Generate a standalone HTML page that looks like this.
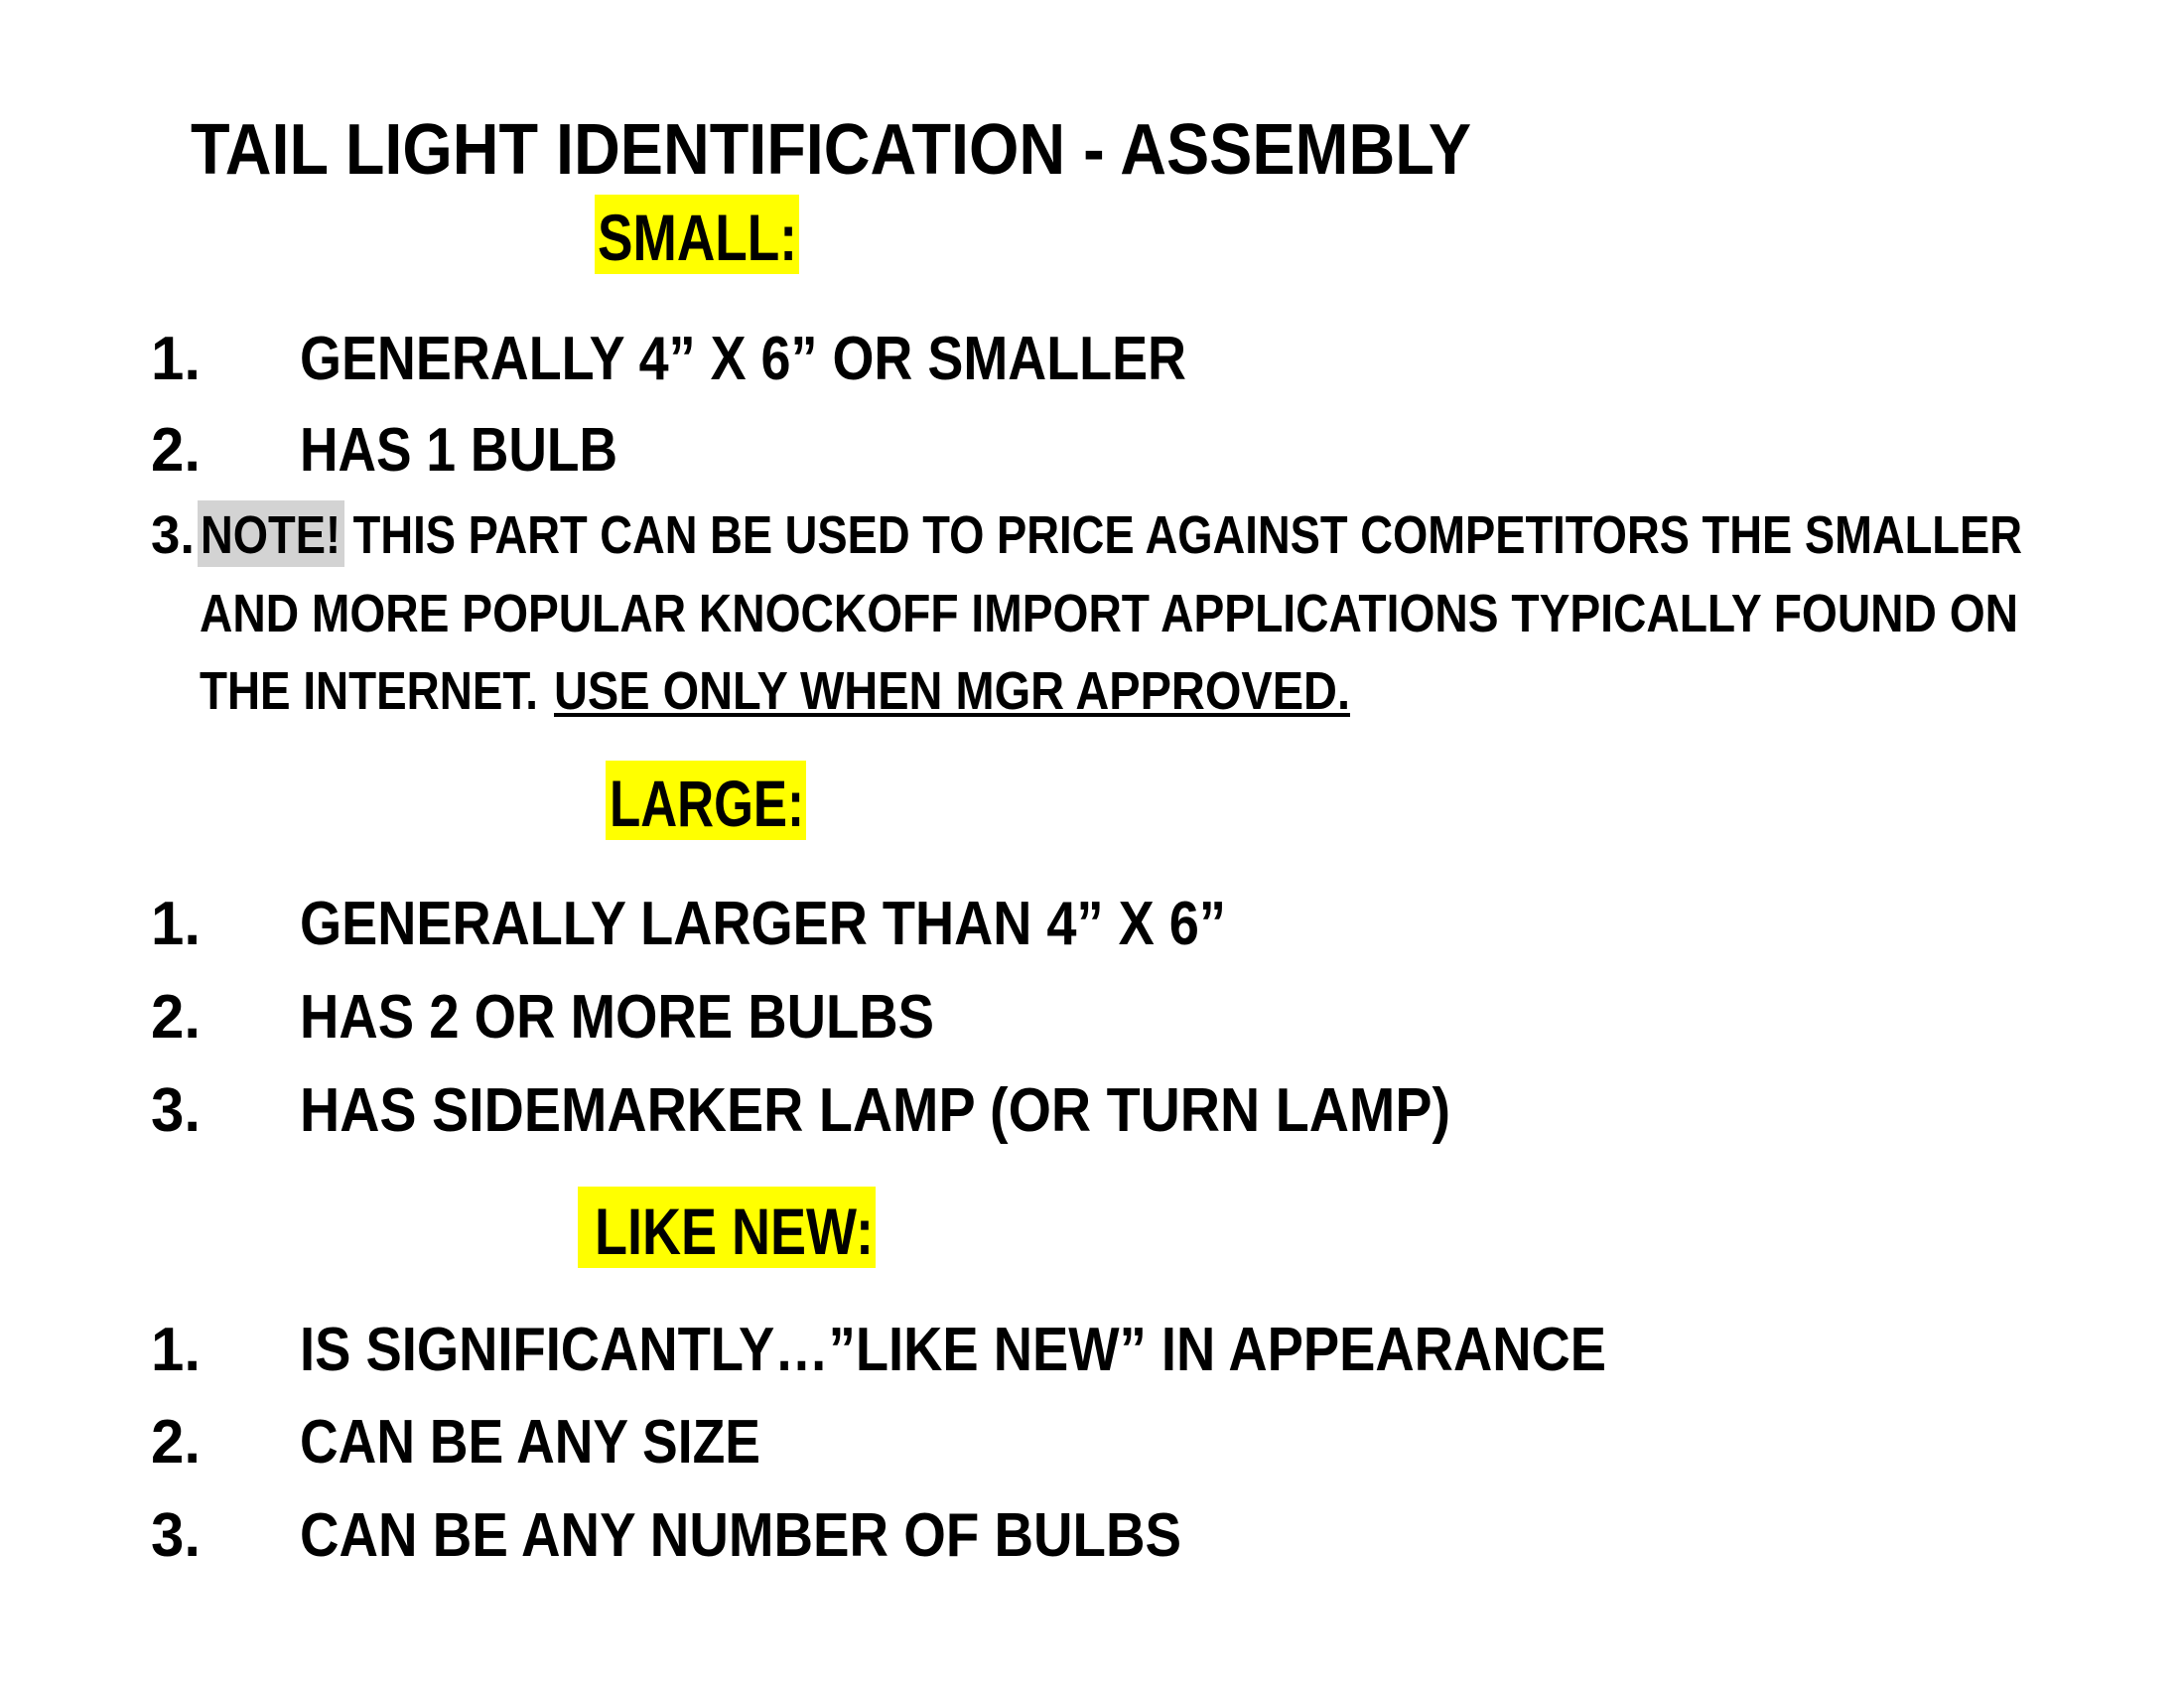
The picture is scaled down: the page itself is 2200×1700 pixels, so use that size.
<!DOCTYPE html>
<html><head><meta charset="utf-8"><style>
html,body{margin:0;padding:0;background:#fff;width:2200px;height:1700px;overflow:hidden}
text{font-family:"Liberation Sans",sans-serif;font-weight:bold;fill:#000}
</style></head><body>
<svg width="2200" height="1700" viewBox="0 0 2200 1700" xmlns="http://www.w3.org/2000/svg">
<rect width="2200" height="1700" fill="#fff"/>
<text x="192" y="175" font-size="72" textLength="1290" lengthAdjust="spacingAndGlyphs">TAIL LIGHT IDENTIFICATION - ASSEMBLY</text>

<rect x="599" y="196" width="206" height="80" fill="#ffff00"/>
<text x="602" y="262" font-size="66" textLength="201" lengthAdjust="spacingAndGlyphs">SMALL:</text>

<text x="152" y="382" font-size="62" textLength="50" lengthAdjust="spacingAndGlyphs">1.</text>
<text x="302" y="382" font-size="62" textLength="893" lengthAdjust="spacingAndGlyphs">GENERALLY 4” X 6” OR SMALLER</text>
<text x="152" y="474" font-size="62" textLength="50" lengthAdjust="spacingAndGlyphs">2.</text>
<text x="302" y="474" font-size="62" textLength="320" lengthAdjust="spacingAndGlyphs">HAS 1 BULB</text>

<rect x="199" y="504" width="148" height="67" fill="#d3d3d3"/>
<text x="152" y="557" font-size="54" textLength="44" lengthAdjust="spacingAndGlyphs">3.</text>
<text x="202" y="557" font-size="54" textLength="1835" lengthAdjust="spacingAndGlyphs">NOTE! THIS PART CAN BE USED TO PRICE AGAINST COMPETITORS THE SMALLER</text>
<text x="201" y="636" font-size="54" textLength="1832" lengthAdjust="spacingAndGlyphs">AND MORE POPULAR KNOCKOFF IMPORT APPLICATIONS TYPICALLY FOUND ON</text>
<text x="201" y="714" font-size="54" textLength="341" lengthAdjust="spacingAndGlyphs">THE INTERNET.</text>
<text x="558" y="714" font-size="54" textLength="802" lengthAdjust="spacingAndGlyphs">USE ONLY WHEN MGR APPROVED.</text>
<rect x="558" y="718" width="802" height="4" fill="#000"/>

<rect x="610" y="766" width="202" height="80" fill="#ffff00"/>
<text x="614" y="832" font-size="66" textLength="196" lengthAdjust="spacingAndGlyphs">LARGE:</text>

<text x="152" y="951" font-size="62" textLength="50" lengthAdjust="spacingAndGlyphs">1.</text>
<text x="302" y="951" font-size="62" textLength="933" lengthAdjust="spacingAndGlyphs">GENERALLY LARGER THAN 4” X 6”</text>
<text x="152" y="1045" font-size="62" textLength="50" lengthAdjust="spacingAndGlyphs">2.</text>
<text x="302" y="1045" font-size="62" textLength="639" lengthAdjust="spacingAndGlyphs">HAS 2 OR MORE BULBS</text>
<text x="152" y="1139" font-size="62" textLength="50" lengthAdjust="spacingAndGlyphs">3.</text>
<text x="302" y="1139" font-size="62" textLength="1159" lengthAdjust="spacingAndGlyphs">HAS SIDEMARKER LAMP (OR TURN LAMP)</text>

<rect x="582" y="1195" width="300" height="82" fill="#ffff00"/>
<text x="599" y="1263" font-size="66" textLength="281" lengthAdjust="spacingAndGlyphs">LIKE NEW:</text>

<text x="152" y="1380" font-size="62" textLength="50" lengthAdjust="spacingAndGlyphs">1.</text>
<text x="302" y="1380" font-size="62" textLength="1316" lengthAdjust="spacingAndGlyphs">IS SIGNIFICANTLY…”LIKE NEW” IN APPEARANCE</text>
<text x="152" y="1473" font-size="62" textLength="50" lengthAdjust="spacingAndGlyphs">2.</text>
<text x="302" y="1473" font-size="62" textLength="464" lengthAdjust="spacingAndGlyphs">CAN BE ANY SIZE</text>
<text x="152" y="1567" font-size="62" textLength="50" lengthAdjust="spacingAndGlyphs">3.</text>
<text x="302" y="1567" font-size="62" textLength="888" lengthAdjust="spacingAndGlyphs">CAN BE ANY NUMBER OF BULBS</text>
</svg>
</body></html>
